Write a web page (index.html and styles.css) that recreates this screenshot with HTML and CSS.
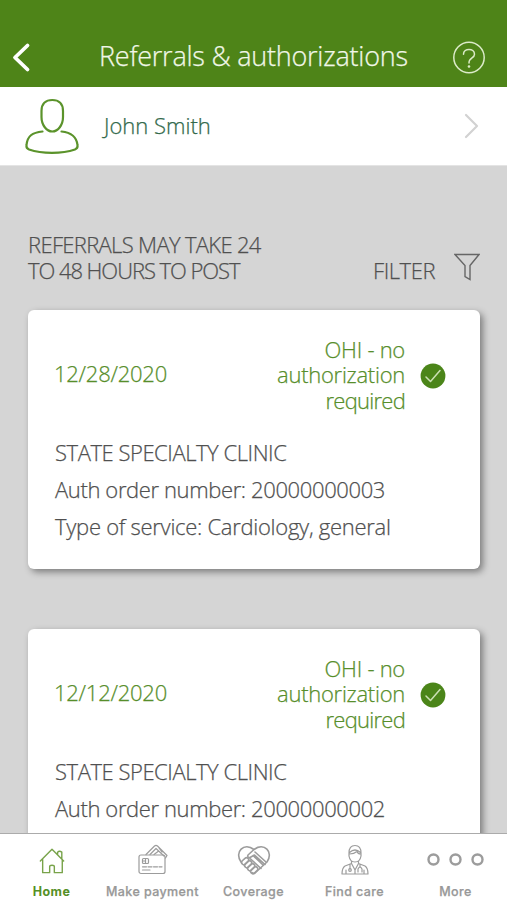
FILE: index.html
```html
<!DOCTYPE html>
<html lang="en">
<head>
<meta charset="utf-8">
<title>Referrals &amp; authorizations</title>
<link rel="stylesheet" href="styles.css">
</head>
<body>
<div class="app">
  <header class="topbar">
    <svg class="back" width="20" height="32" viewBox="0 0 20 32"><path d="M15.500 3.500 3 15.500 15.500 27.500"/></svg>
    <h1 class="title">Referrals &amp; authorizations</h1>
    <svg class="help" width="34" height="34" viewBox="0 0 34 34"><circle cx="17" cy="16.500" r="15.200"/><path d="M11.500 13.200C11.500 6.800 22.500 6.800 22.500 13.200C22.500 17.500 17 16.500 17 22"/><circle class="dot" cx="17" cy="25.500" r="1.300"/></svg>
  </header>
  <section class="member">
    <svg class="avatar" width="56" height="58" viewBox="0 0 56 58"><path d="M28.300 3C35 3 39 7 39 14V20C39 28 34 34.500 28.300 34.500S17.500 28 17.500 20V14C17.500 7 21.500 3 28.300 3Z"/><path d="M18.500 34.500C8 35.500 3.500 39 2.500 48Q2 51.500 5 52.500C18 57 38 57 51 52.500Q54 51.500 53.500 48C52.500 39 47 35.500 37.500 34.500"/></svg>
    <span class="name">John Smith</span>
    <svg class="next" width="16" height="28" viewBox="0 0 16 28"><path d="M2 3 13 14 2 25"/></svg>
  </section>
  <main class="content">
    <div class="notice">
      <p class="notice-text"><span class="first">REFERRALS MAY TAKE 24</span><br><span class="second">TO 48 HOURS TO POST</span></p>
      <span class="filter">FILTER</span>
      <svg class="funnel" width="26" height="28" viewBox="0 0 26 28"><path d="M1 1.500H25L16 12.500V26.500L11 23.500V12.500Z"/></svg>
    </div>
    <article class="card">
      <div class="status-row">
        <span class="date">12/28/2020</span>
        <p class="status">OHI - no<br>authorization<br><span class="required">required</span></p>
        <svg class="check" width="26" height="26" viewBox="0 0 26 26"><circle cx="13" cy="13" r="12.400"/><path d="M6 14 10.500 18.500 20 7.500"/></svg>
      </div>
      <p class="line clinic">STATE SPECIALTY CLINIC</p>
      <p class="line order">Auth order number: 20000000003</p>
      <p class="line service">Type of service: Cardiology, general</p>
    </article>
    <article class="card">
      <div class="status-row">
        <span class="date">12/12/2020</span>
        <p class="status">OHI - no<br>authorization<br><span class="required">required</span></p>
        <svg class="check" width="26" height="26" viewBox="0 0 26 26"><circle cx="13" cy="13" r="12.400"/><path d="M6 14 10.500 18.500 20 7.500"/></svg>
      </div>
      <p class="line clinic">STATE SPECIALTY CLINIC</p>
      <p class="line order">Auth order number: 20000000002</p>
    </article>
  </main>
  <nav class="tabs">
    <div class="tab active">
      <svg width="28" height="30" viewBox="0 0 30 30"><path d="M2.500 15 15 2.500 27.500 15M5 13V27.500H12.500V21Q12.500 19.500 15 19.500T17.500 21V27.500H26V13M21 8V5.500Q23 3.500 25.500 5.500V12"/></svg>
      <span>Home</span>
    </div>
    <div class="tab">
      <svg width="34" height="32" viewBox="0 0 34 32"><rect x="3" y="11" width="26" height="18.500" rx="2"/><path d="M10 10.500 18.500 2Q20 .8 21.500 2L31 11.500 29.500 14M14 10.500 20 4.500 28 12M18 10.500 22 7.500M26 8 23 4"/><rect x="6.500" y="14.500" width="6" height="5" rx="1"/><path d="M9.500 15V19M6.500 17H9.500"/><path d="M6.500 22.800H26" stroke-dasharray="4 1.500"/><path d="M6.500 26H14"/></svg>
      <span>Make payment</span>
    </div>
    <div class="tab">
      <svg width="36" height="32" viewBox="0 0 36 32"><g class="strong"><path d="M5 18C-2 8 8-2 18 5.500C28-2 38 8 31 18L19 29Q17.500 30 16 28.500"/><path d="M18 5.500 12 11Q11 13.500 14 13.500L18.500 11 29 20.500M19 8 30 18M13.500 14 25 24.500M17 11.500 27 21"/><rect x="5" y="15" width="8" height="4.500" rx="2.200" transform="rotate(-43 9 17)"/><rect x="8" y="18" width="8" height="4.500" rx="2.200" transform="rotate(-43 12 20)"/><rect x="11" y="21" width="8" height="4.500" rx="2.200" transform="rotate(-43 15 23)"/><rect x="14" y="24" width="8" height="4.500" rx="2.200" transform="rotate(-43 18 26)"/></g></svg>
      <span>Coverage</span>
    </div>
    <div class="tab">
      <svg width="30" height="32" viewBox="0 0 30 32"><path d="M9 9Q9 1.500 15 1.500T21 9V12Q20 18 15 18T9 12ZM9.500 8.500Q15 3.500 20.500 8.500M9.500 10Q14 10 17 7.500Q18 10 20.500 10M11.500 17V19.500L5 22Q2 24 2 30H28Q28 24 25 22L18.500 19.500V17M11.500 19.500 15 26 18.500 19.500M15 26V30M10 20V25M20 20V23M6 26V30M24 26V30"/><circle cx="10" cy="26" r="1.300"/><path d="M18 28V25Q20 21 22 25V28"/></svg>
      <span>Find care</span>
    </div>
    <div class="tab">
      <svg width="60" height="32" viewBox="0 0 60 32"><g class="rings"><circle cx="7.500" cy="15.500" r="5"/><circle cx="29.500" cy="15.500" r="5"/><circle cx="51.500" cy="15.500" r="5"/></g></svg>
      <span>More</span>
    </div>
  </nav>
</div>
</body>
</html>
```
FILE: styles.css
```css
* { box-sizing: border-box; }
body { margin: 0; }
h1, p { margin: 0; font-weight: inherit; }
svg { display: block; flex: none; fill: none; stroke-linecap: round; stroke-linejoin: round; }
.app {
  height: 900px;
  display: flex;
  flex-direction: column;
  overflow: hidden;
  background: #d5d5d5;
  color: #505050;
  font: 300 22px/25.500px "Open Sans", "Noto Sans", sans-serif;
  -webkit-text-stroke: .25px currentColor;
  white-space: nowrap;
}
.topbar {
  height: 87px;
  flex: none;
  display: flex;
  align-items: center;
  padding: 28px 21px 0 12px;
  background: #4e8418;
  color: #f1f7e8;
}
.back { stroke: #fff; stroke-width: 3.800; }
.title { margin-left: 67px; padding-bottom: 3px; font-size: 27px; line-height: 34px; width: 310px; letter-spacing: -.24px; }
.help { margin-left: auto; stroke: #dcebc9; stroke-width: 1.500; }
.help .dot { fill: #dcebc9; stroke: none; }
.member {
  height: 79px;
  flex: none;
  display: flex;
  align-items: center;
  padding: 0 27px 0 24px;
  background: #fff;
  border-bottom: 1px solid #e4e4e4;
}
.avatar { stroke: #5b932b; stroke-width: 2.200; }
.name { margin-left: 24px; padding-bottom: 1px; color: #32694b; }
.next { margin-left: auto; stroke: #d2d2d2; stroke-width: 2.200; }
.content { flex: 1; min-height: 0; overflow: hidden; padding: 66px 27px 0 28px; }
.notice { display: flex; align-items: flex-end; height: 51px; margin-bottom: 27px; }
.first { letter-spacing: -.67px; }
.second { letter-spacing: -1.050px; }
.filter { margin-left: auto; letter-spacing: -.45px; }
.funnel { margin: 0 0 2px 19px; stroke: #666; stroke-width: 1.400; stroke-linejoin: miter; }
.card {
  height: 259px;
  margin-bottom: 60px;
  padding: 27px 34px 0 27px;
  border-radius: 6px;
  background: #fff;
  box-shadow: 3px 3px 7px rgba(0, 0, 0, .42);
}
.status-row { display: flex; align-items: center; height: 78px; margin-bottom: 19px; color: #578e2b; }
.date { margin-left: -1px; padding-bottom: 5px; letter-spacing: -.25px; }
.status { margin-left: auto; padding-bottom: 2px; text-align: right; letter-spacing: -.27px; }
.required { letter-spacing: -.75px; }
.check { margin-left: 15px; }
.check circle { fill: #4b8519; }
.check path { stroke: #cbe0b4; stroke-width: 1.500; }
.line { height: 37px; line-height: 37px; }
.clinic { letter-spacing: -.45px; }
.order { letter-spacing: -.38px; }
.service { letter-spacing: -.28px; }
.tabs {
  height: 67px;
  flex: none;
  display: grid;
  grid-template-columns: repeat(5, 101px);
  padding-left: 1px;
  background: #fff;
  border-top: 1px solid #ababab;
  color: #989898;
  font: 500 12.500px/17px Inter, "Open Sans", sans-serif;
  letter-spacing: .4px;
}
.tab { display: flex; flex-direction: column; align-items: center; justify-content: flex-end; }
.tab svg { margin-bottom: 7px; stroke: #9c9c9c; stroke-width: 1.200; }
.active { color: #559026; font-weight: 700; letter-spacing: .4px; -webkit-text-stroke: 0; }
.tab.active svg { stroke: #78a34a; stroke-width: 1.500; }
.tab .strong { stroke-width: 1.600; }
.tab .rings { stroke-width: 2.400; }
```
